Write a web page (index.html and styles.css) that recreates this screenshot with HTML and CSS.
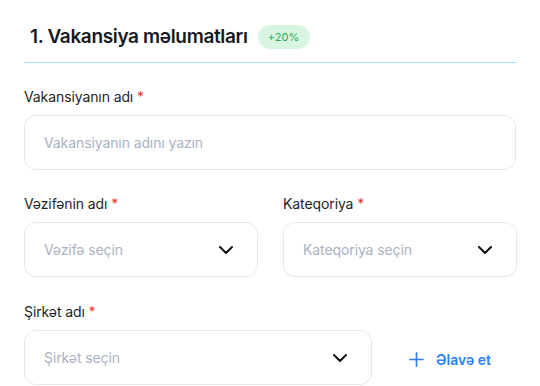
FILE: index.html
```html
<!DOCTYPE html>
<html lang="az">
<head>
<meta charset="utf-8">
<link rel="stylesheet" href="styles.css">
</head>
<body>
<div class="page">
  <div class="header">
    <h2 class="title">1. Vakansiya məlumatları</h2>
    <span class="badge">+20%</span>
  </div>
  <div class="divider"></div>

  <div class="field">
    <label class="label">Vakansiyanın adı <span class="req">*</span></label>
    <div class="input"><span class="ph">Vakansiyanın adını yazın</span></div>
  </div>

  <div class="row two">
    <div class="field">
      <label class="label">Vəzifənin adı <span class="req">*</span></label>
      <div class="input select"><span class="ph">Vəzifə seçin</span>
        <svg class="chev" viewBox="0 0 14 8" width="14" height="8"><path d="M1 1l6 6 6-6" fill="none" stroke="#111" stroke-width="2" stroke-linecap="round" stroke-linejoin="round"/></svg>
      </div>
    </div>
    <div class="field">
      <label class="label">Kateqoriya <span class="req">*</span></label>
      <div class="input select"><span class="ph">Kateqoriya seçin</span>
        <svg class="chev" viewBox="0 0 14 8" width="14" height="8"><path d="M1 1l6 6 6-6" fill="none" stroke="#111" stroke-width="2" stroke-linecap="round" stroke-linejoin="round"/></svg>
      </div>
    </div>
  </div>

  <div class="field">
    <label class="label">Şirkət adı <span class="req">*</span></label>
    <div class="row company">
      <div class="input select grow"><span class="ph">Şirkət seçin</span>
        <svg class="chev" viewBox="0 0 14 8" width="14" height="8"><path d="M1 1l6 6 6-6" fill="none" stroke="#111" stroke-width="2" stroke-linecap="round" stroke-linejoin="round"/></svg>
      </div>
      <button class="add">
        <svg viewBox="0 0 16 16" width="15" height="15"><path d="M8 1v14M1 8h14" fill="none" stroke="#2f7ff5" stroke-width="1.8" stroke-linecap="round"/></svg>
        <span>Əlavə et</span>
      </button>
    </div>
  </div>
</div>
</body>
</html>
```

FILE: styles.css
```css
* { box-sizing: border-box; }
html, body { margin: 0; padding: 0; background: #fff; }
body {
  font-family: Inter, "Noto Sans", "Liberation Sans", sans-serif;
  color: #1b1f26;
  overflow: hidden;
}
.page {
  padding: 24px 24px 0 24px;
  width: 540px;
}
.header {
  display: flex;
  align-items: center;
  gap: 10px;
  padding-left: 6px;
  height: 26px;
}
.title {
  margin: 0;
  font-size: 19px;
  font-weight: 600;
  letter-spacing: -0.35px;
  color: #16191f;
  line-height: 24px;
}
.badge {
  display: inline-flex;
  align-items: center;
  justify-content: center;
  width: 52px;
  height: 24px;
  border-radius: 12px;
  background: #d8f5e2;
  color: #2fae55;
  font-size: 11px;
  font-weight: 400;
}
.divider {
  height: 1px;
  background: #a9d9fb;
  margin-top: 12px;
  width: 492px;
}
.field {
  display: flex;
  flex-direction: column;
}
.label {
  font-size: 14px;
  color: #1b1f26;
  line-height: 18px;
  margin-bottom: 9px;
  letter-spacing: -0.1px;
}
.divider + .field { margin-top: 25px; }
.req { color: #e53b3b; }
.input {
  height: 55px;
  border: 1px solid #e3e9f1;
  border-radius: 12px;
  display: flex;
  align-items: center;
  padding: 0 19px;
  width: 492px;
}
.ph {
  color: #a9b3c4;
  font-size: 14px;
  letter-spacing: -0.1px;
}
.select { justify-content: space-between; padding-right: 24px; }
.chev { display: block; }
.row { display: flex; }
.two {
  gap: 25px;
  margin-top: 25px;
}
.two .field { width: 234px; }
.two .input { width: 234px; }
.two + .field { margin-top: 26px; }
.company { align-items: center; gap: 37px; }
.company .input { width: 348px; }
.add {
  display: flex;
  align-items: center;
  gap: 12px;
  background: none;
  border: 0;
  padding: 0;
  font-family: inherit;
  font-size: 14px;
  font-weight: 600;
  color: #2f7ff5;
  margin-top: 3px;
}
```
